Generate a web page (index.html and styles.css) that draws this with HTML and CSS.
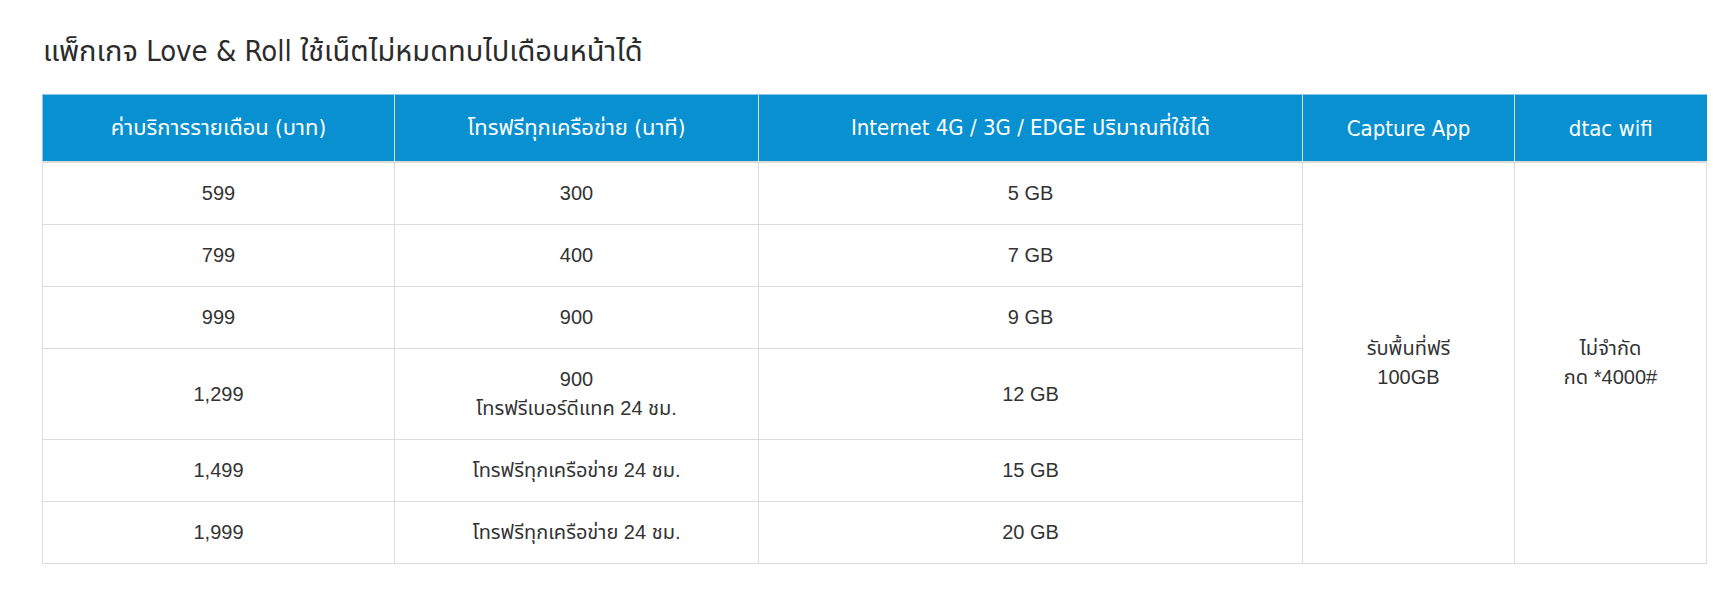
FILE: index.html
```html
<!DOCTYPE html>
<html lang="th">
<head>
<meta charset="utf-8">
<title>Love &amp; Roll</title>
<link rel="stylesheet" href="styles.css">
</head>
<body>
<main class="page">
  <h1 class="title">แพ็กเกจ Love &amp; Roll ใช้เน็ตไม่หมดทบไปเดือนหน้าได้</h1>
  <table class="plans">
    <colgroup>
      <col class="c-price">
      <col class="c-call">
      <col class="c-net">
      <col class="c-app">
      <col class="c-wifi">
    </colgroup>
    <thead>
      <tr>
        <th>ค่าบริการรายเดือน (บาท)</th>
        <th>โทรฟรีทุกเครือข่าย (นาที)</th>
        <th>Internet 4G / 3G / EDGE ปริมาณที่ใช้ได้</th>
        <th>Capture App</th>
        <th>dtac wifi</th>
      </tr>
    </thead>
    <tbody>
      <tr>
        <td>599</td>
        <td>300</td>
        <td>5 GB</td>
        <td rowspan="6">รับพื้นที่ฟรี<br>100GB</td>
        <td rowspan="6">ไม่จำกัด<br>กด *4000#</td>
      </tr>
      <tr><td>799</td><td>400</td><td>7 GB</td></tr>
      <tr><td>999</td><td>900</td><td>9 GB</td></tr>
      <tr><td>1,299</td><td>900<br>โทรฟรีเบอร์ดีแทค 24 ชม.</td><td>12 GB</td></tr>
      <tr><td>1,499</td><td>โทรฟรีทุกเครือข่าย 24 ชม.</td><td>15 GB</td></tr>
      <tr><td>1,999</td><td>โทรฟรีทุกเครือข่าย 24 ชม.</td><td>20 GB</td></tr>
    </tbody>
  </table>
</main>
</body>
</html>
```

FILE: styles.css
```css
html, body {
  margin: 0;
  padding: 0;
  background: #ffffff;
}

.page {
  padding: 28px 26px 0 42px;
  font-family: Tahoma, "Liberation Sans", "Noto Sans Thai", sans-serif;
  color: #333333;
}

.title {
  margin: 0 0 20px 1px;
  font-family: "DejaVu Sans Condensed", "Noto Sans Thai", "Noto Sans", sans-serif;
  font-stretch: condensed;
  font-weight: normal;
  font-size: 29px;
  line-height: 46px;
  color: #2b2b2b;
}

.plans {
  width: 1664px;
  border-collapse: collapse;
  table-layout: fixed;
}

.c-price { width: 352px; }
.c-call { width: 364px; }
.c-net { width: 544px; }
.c-app { width: 212px; }
.c-wifi { width: 192px; }

.plans th {
  height: 66px;
  padding: 0 10px;
  background: #0890d0;
  color: #ffffff;
  font-family: "DejaVu Sans Condensed", "Noto Sans Thai", "Noto Sans", sans-serif;
  font-stretch: condensed;
  font-weight: normal;
  font-size: 22px;
  text-align: center;
  vertical-align: middle;
  border-left: 1px solid #dcdcdc;
  border-bottom: 2px solid #dcdcdc;
  border-top: 1px solid #8cc8e8;
}

.plans th:first-child {
  border-left: 1px solid #8cc8e8;
}

.plans td {
  height: 61px;
  padding: 0 10px;
  font-size: 20px;
  line-height: 29px;
  text-align: center;
  vertical-align: middle;
  border: 1px solid #dcdcdc;
  color: #333333;
}

.plans tbody tr:nth-child(4) td {
  height: 90px;
}
```
